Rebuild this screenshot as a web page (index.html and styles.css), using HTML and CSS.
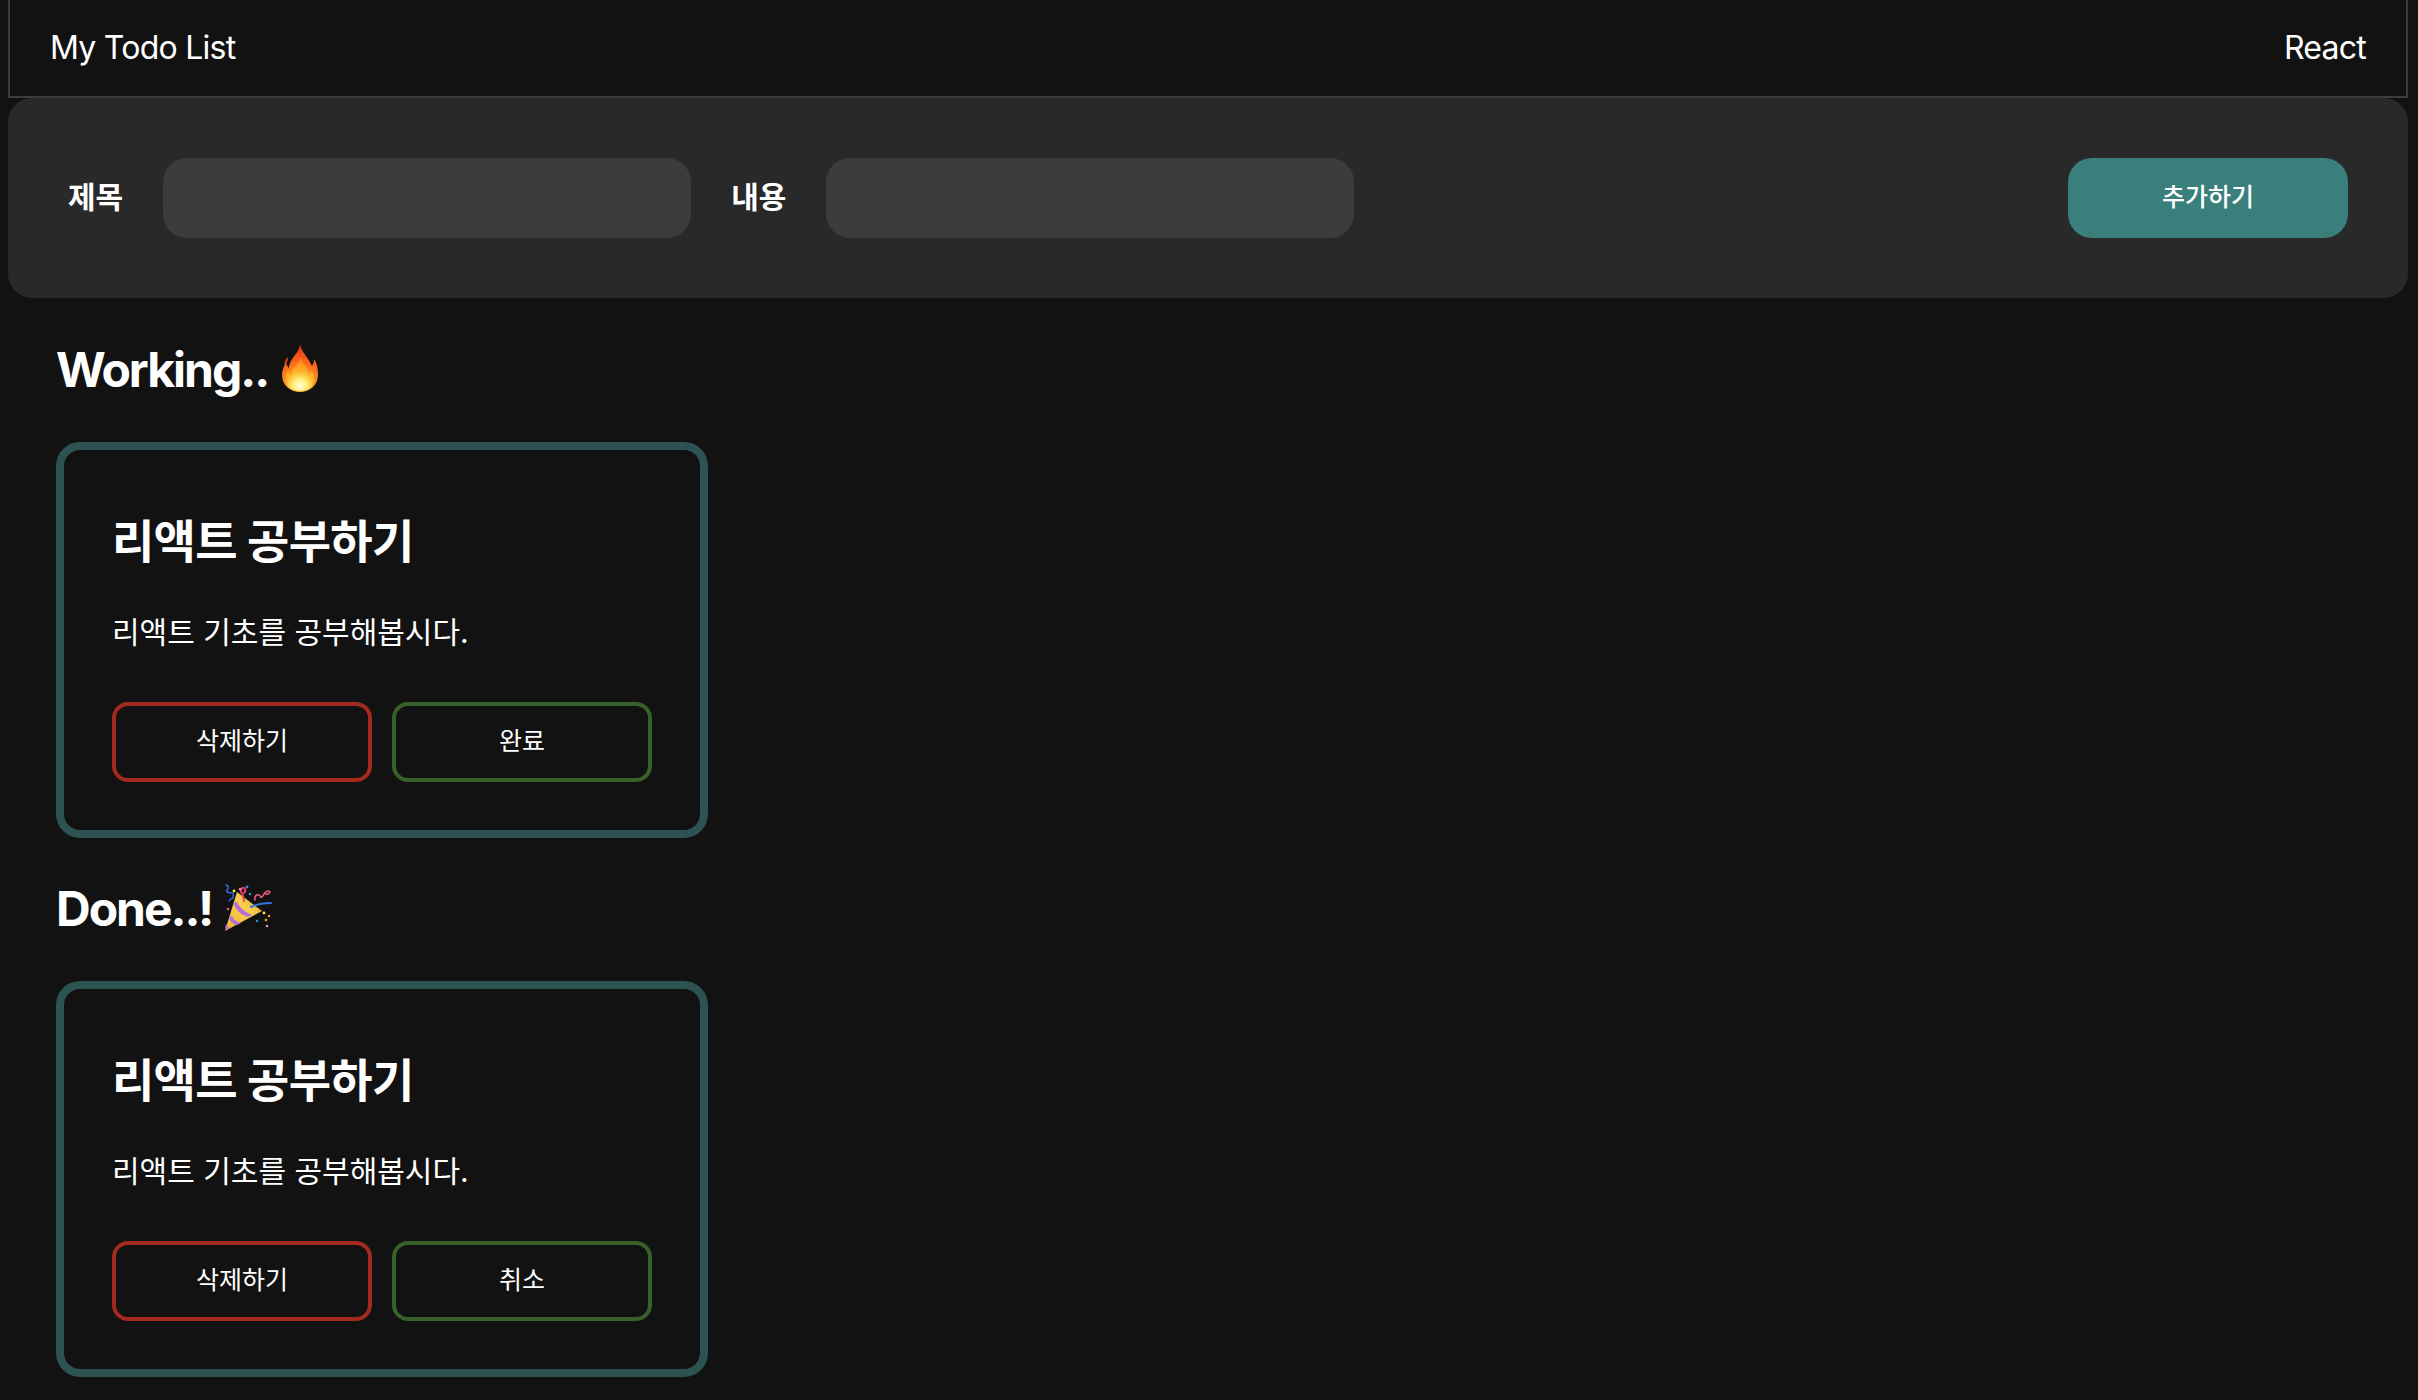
FILE: index.html
```html
<!DOCTYPE html>
<html lang="ko">
<head>
<meta charset="utf-8">
<title>My Todo List</title>
<link rel="stylesheet" href="styles.css">
</head>
<body>
<div class="app">
  <header class="topbar">
    <span>My Todo List</span>
    <span>React</span>
  </header>
  <form class="add-form">
    <label class="field-label" for="title">제목</label>
    <input class="field-input" id="title" type="text">
    <label class="field-label" for="body">내용</label>
    <input class="field-input" id="body" type="text">
    <button class="add-btn" type="button">추가하기</button>
  </form>
  <main class="lists">
    <section class="list">
      <h2 class="list-title">Working..
        <svg class="emoji" viewBox="0 0 48 48" role="img" aria-label="fire">
          <defs>
            <radialGradient id="fireOuter" gradientUnits="userSpaceOnUse" cx="20" cy="43" r="42">
              <stop offset="0" stop-color="#ffc22e"/>
              <stop offset=".4" stop-color="#ff8a1c"/>
              <stop offset=".75" stop-color="#f4511a"/>
              <stop offset="1" stop-color="#e5331a"/>
            </radialGradient>
            <radialGradient id="fireInner" gradientUnits="userSpaceOnUse" cx="20" cy="42" r="24">
              <stop offset="0" stop-color="#fffde2"/>
              <stop offset=".28" stop-color="#ffef7a"/>
              <stop offset=".6" stop-color="#ffb42a"/>
              <stop offset="1" stop-color="#ff8a1c"/>
            </radialGradient>
          </defs>
          <path fill="#e8431a" d="M4.5 22C4 19 5.500 15 8 13c0 3-1 6-3.500 9z"/>
          <path fill="url(#fireOuter)" d="M20 0c1 6 5 10 8 15 2 3 3 5 4 7 1-2 2-4 2-7 3 4 4 10 4 16 0 10-8 17-18 17S2 41 2 31c0-5 2-9 4-12 1 2 1.500 4 3 5 0-5 3-9 6-13 3-4 5-7 5-11z"/>
          <path fill="url(#fireInner)" d="M21 14c1 4 4 7 6 10 1 2 2 4 3 6 1-1 1.500-3 1.500-4 2 3 3 6 3 9 0 7-6 12-14.500 12S5.500 42 5.500 35c0-3 1-6 3-8 .5 2 1.500 3 2.500 4 0-5 3-8 6-11 2-2 3.500-4 4-6z"/>
        </svg>
      </h2>
      <article class="card">
        <h3 class="card-title">리액트 공부하기</h3>
        <p class="card-text">리액트 기초를 공부해봅시다.</p>
        <div class="card-actions">
          <button class="action-btn danger" type="button">삭제하기</button>
          <button class="action-btn success" type="button">완료</button>
        </div>
      </article>
    </section>
    <section class="list">
      <h2 class="list-title">Done..!
        <svg class="emoji" viewBox="0 0 48 48" role="img" aria-label="party popper">
          <defs>
            <linearGradient id="cone" x1="0" y1="1" x2="1" y2="0">
              <stop offset="0" stop-color="#f2b631"/>
              <stop offset=".6" stop-color="#f7cf4b"/>
              <stop offset="1" stop-color="#d9962a"/>
            </linearGradient>
          </defs>
          <path fill="url(#cone)" d="M13 8 38 27 1 47z"/>
          <path fill="#b76fd8" d="M9 19l4-1c3 6 8 10 15 13l-4 2C17 31 12 26 9 19z"/>
          <path fill="#b76fd8" d="M5 33l3-1c2 4 5 6 9 7l-4 2c-4-1-7-3-8-8zM1 44l1-4c1 2 2 3 4 4l-3 2z"/>
          <path fill="none" stroke="#2f78e8" stroke-width="2" stroke-linecap="round" d="M27 23c6-3 12-4 20-4"/>
          <path fill="none" stroke="#ed3a6c" stroke-width="2" stroke-linecap="round" d="M20 17c0-5-1-6-3-9-1-3 2-6 4-3 1 2-1 4-1 4"/>
          <path fill="none" stroke="#ed5c80" stroke-width="1.6" stroke-linecap="round" d="M31 16c-1-4 2-6 4-5 2 0 1 4 3 2s2-4 4-5c2-2 3-1 4 0-1 2-2 3-4 2"/>
          <path fill="none" stroke="#2f6fe0" stroke-width="1.5" stroke-linecap="round" d="M2 1c3 1 3 3 1 5s3 3 5 3 1 5 1 5-3 1-4 3"/>
          <circle cx="10" cy="7" r="1.4" fill="#ffe23c"/>
          <circle cx="23" cy="3" r="1.4" fill="#2f8cf0"/>
          <circle cx="26" cy="10" r="1.3" fill="#2f8cf0"/>
          <circle cx="16" cy="5" r="1.2" fill="#f08aa8"/>
          <circle cx="4" cy="25" r="1.3" fill="#ed5c80"/>
          <circle cx="40" cy="29" r="1.4" fill="#ffe23c"/>
          <circle cx="45" cy="32" r="1.3" fill="#f6a12e"/>
          <circle cx="42" cy="36" r="1.3" fill="#f6a12e"/>
          <circle cx="33" cy="37" r="1.2" fill="#2f8cf0"/>
          <circle cx="43" cy="42" r="1.3" fill="#f08aa8"/>
        </svg>
      </h2>
      <article class="card">
        <h3 class="card-title">리액트 공부하기</h3>
        <p class="card-text">리액트 기초를 공부해봅시다.</p>
        <div class="card-actions">
          <button class="action-btn danger" type="button">삭제하기</button>
          <button class="action-btn success" type="button">취소</button>
        </div>
      </article>
    </section>
  </main>
</div>
</body>
</html>
```
FILE: styles.css
```css
* { box-sizing: border-box; }
html, body { height: 100%; }
body {
  margin: 0;
  padding: 0 8px;
  background: #121212;
  color: #fff;
  font-family: Inter, "Noto Sans CJK KR", sans-serif;
  overflow: hidden;
}
.app { width: 2400px; }
.topbar {
  display: flex;
  justify-content: space-between;
  align-items: center;
  height: 98px;
  padding: 0 40px;
  border: 2px solid #3c3c3c;
  border-top: 0;
  font-size: 32px;
  font-weight: 400;
  line-height: 1;
  letter-spacing: -0.75px;
}
.add-form {
  display: flex;
  align-items: flex-start;
  height: 200px;
  padding: 60px;
  gap: 40px;
  background: #292929;
  border-radius: 24px;
}
.field-label {
  font-size: 30px;
  font-weight: 700;
  line-height: 78px;
}
.field-input {
  width: 528px;
  height: 80px;
  border: 0;
  border-radius: 24px;
  background: #3c3c3c;
  color: #fff;
}
.add-btn {
  width: 280px;
  height: 80px;
  margin-left: auto;
  border: 0;
  border-radius: 24px;
  background: #3a7f7c;
  color: #fff;
  font: 500 25px Inter, "Noto Sans CJK KR", sans-serif;
  padding-bottom: 8px;
}
.lists { padding: 0 48px; }
.list-title {
  display: flex;
  align-items: center;
  gap: 12px;
  height: 144px;
  margin: 0;
  font-size: 48px;
  font-weight: 700;
  line-height: 1;
  letter-spacing: -2px;
  padding-bottom: 1px;
}
.list + .list .list-title { height: 143px; }
.emoji { width: 48px; height: 48px; flex: none; margin-top: -3px; }
.card {
  display: flex;
  flex-direction: column;
  width: 652px;
  height: 396px;
  padding: 48px;
  border: 8px solid #2d5252;
  border-radius: 24px;
}
.card-title {
  margin: 0;
  height: 86px;
  font-size: 46px;
  font-weight: 700;
  line-height: 86px;
  letter-spacing: -0.7px;
}
.card-text {
  margin: 25px 0 0;
  font-size: 30px;
  font-weight: 400;
  line-height: 46px;
}
.card-actions {
  display: flex;
  gap: 20px;
  margin-top: auto;
}
.action-btn {
  width: 260px;
  height: 80px;
  border: 4px solid;
  border-radius: 16px;
  background: transparent;
  color: #fff;
  font: 400 25px Inter, "Noto Sans CJK KR", sans-serif;
  padding-bottom: 8px;
}
.danger { border-color: #a32a1e; }
.success { border-color: #38602a; }
```
